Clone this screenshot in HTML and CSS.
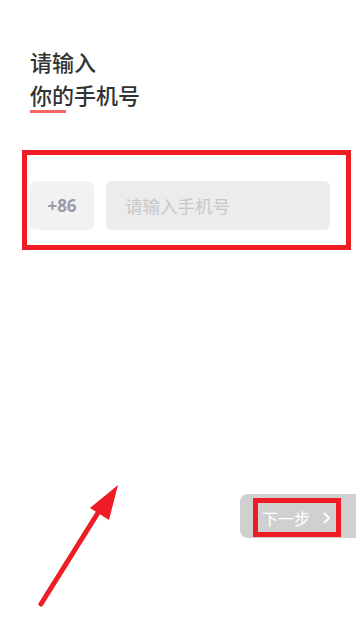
FILE: index.html
```html
<!DOCTYPE html>
<html lang="zh">
<head>
<meta charset="utf-8">
<link rel="stylesheet" href="styles.css">
</head>
<body>
<div class="page">
  <h1 class="title"><span>请输入</span><span>你的手机号</span></h1>
  <div class="underline"></div>
  <div class="mark-box">
    <div class="phone-row">
      <div class="code">+86</div>
      <div class="input">请输入手机号</div>
    </div>
  </div>
  <div class="next-wrap">
    <div class="next-btn">
      <div class="next-mark">
        <span class="next-text">下一步</span>
        <svg class="chev" width="10" height="14" viewBox="0 0 10 14"><path d="M2.5 2.5 L7 7 L2.5 11.5" fill="none" stroke="#fff" stroke-width="1.8" stroke-linecap="round" stroke-linejoin="round"/></svg>
      </div>
    </div>
  </div>
  <svg class="arrow" width="360" height="619" viewBox="0 0 360 619">
    <line x1="41" y1="604" x2="101" y2="508" stroke="#ee1c25" stroke-width="5" stroke-linecap="round"/>
    <polygon points="118,485 90,508 109,520" fill="#ee1c25"/>
  </svg>
</div>
</body>
</html>
```
FILE: styles.css
```css
html, body {
  margin: 0;
  padding: 0;
  background: #fff;
}
.page {
  position: relative;
  width: 360px;
  height: 619px;
  overflow: hidden;
  font-family: "Noto Sans CJK SC", "Noto Sans", sans-serif;
}
.title {
  margin: 0;
  padding: 45px 0 0 30px;
  font-size: 22px;
  line-height: 33px;
  font-weight: 500;
  color: #333;
  display: flex;
  flex-direction: column;
}
.underline {
  margin: -1px 0 0 30px;
  width: 36px;
  height: 3px;
  background: #f46464;
}
.mark-box {
  margin: 37px 0 0 22px;
  width: 319px;
  height: 90px;
  border: 5px solid #ee1c25;
  padding: 26px 0 0 3px;
  box-sizing: border-box;
  width: 329px;
  height: 100px;
}
.phone-row {
  display: flex;
  gap: 12px;
  height: 49px;
}
.code {
  width: 64px;
  background: #f2f2f2;
  border-radius: 6px;
  display: flex;
  align-items: center;
  justify-content: center;
  color: #9a9aa8;
  font-weight: 700;
  font-size: 17px;
  font-family: "Noto Sans", sans-serif;
}
.input {
  width: 205px;
  padding-left: 19px;
  background: #ececec;
  border-radius: 6px;
  display: flex;
  align-items: center;
  color: #c8c8c8;
  font-size: 17.5px;
}
.next-wrap {
  margin-top: 244px;
  display: flex;
  padding-left: 240px;
}
.next-btn {
  width: 116px;
  height: 44px;
  background: #d0d0d0;
  border-radius: 8px 0 0 8px;
  padding: 4px 0 0 13px;
  box-sizing: border-box;
}
.next-mark {
  width: 88px;
  height: 39px;
  border: 5px solid #ee1c25;
  box-sizing: border-box;
  display: flex;
  align-items: center;
  padding-left: 4px;
  color: #fff;
  font-size: 16px;
}
.chev {
  margin-left: 12px;
}
.arrow {
  position: absolute;
  left: 0;
  top: 0;
  pointer-events: none;
}
```
